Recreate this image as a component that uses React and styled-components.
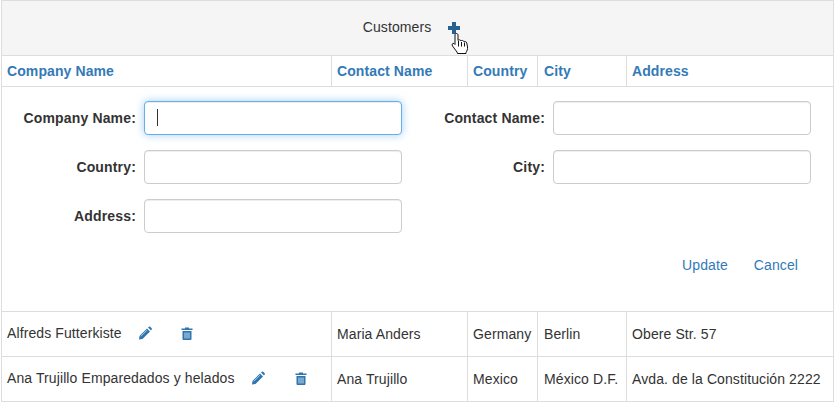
import React from "react";
import styled, { createGlobalStyle } from "styled-components";

const GlobalStyle = createGlobalStyle`
  html, body { margin: 0; padding: 0; background: #fff; }
  body { font-family: "Liberation Sans", Arial, sans-serif; font-size: 14px; letter-spacing: 0.1px; color: #333; }
`;

const customers = [
  { company: "Alfreds Futterkiste", contact: "Maria Anders", country: "Germany", city: "Berlin", address: "Obere Str. 57", between: 29 },
  { company: "Ana Trujillo Emparedados y helados", contact: "Ana Trujillo", country: "Mexico", city: "México D.F.", address: "Avda. de la Constitución 2222", between: 30 },
];

const columns = ["Company Name", "Contact Name", "Country", "City", "Address"];

const Grid = styled.div`
  width: 833px;
  height: 402px;
  box-sizing: border-box;
  margin-left: 1px;
  border: 1px solid #ddd;
  border-bottom: 0;
  display: flex;
  flex-direction: column;
  overflow: hidden;
`;

const TitleBar = styled.div`
  height: 54px;
  flex: none;
  background: #f5f5f5;
  border-bottom: 1px solid #ddd;
  display: flex;
  justify-content: center;
  align-items: center;
  gap: 17px;
  padding-right: 12px;
`;

const TitleText = styled.span`
  position: relative;
  top: -1px;
`;

const AddButton = styled.span`
  position: relative;
  display: flex;
  width: 12px;
  height: 12px;
  color: #286090;
`;

const HandCursor = styled.svg`
  position: absolute;
  left: 3px;
  top: 10px;
  width: 18px;
  height: 22px;
`;

const Row = styled.div`
  display: grid;
  grid-template-columns: 329px 136px 70px 89px 1fr;
  height: ${(p) => p.$height}px;
  flex: none;
  border-bottom: 1px solid #ddd;
`;

const HeadCell = styled.a`
  display: flex;
  align-items: center;
  padding-left: ${(p) => (p.$wide ? 6 : 5)}px;
  border-left: ${(p) => (p.$first ? 0 : "1px solid #ddd")};
  color: #337ab7;
  font-weight: 700;
  white-space: nowrap;
`;

const Cell = styled.div`
  display: flex;
  align-items: center;
  padding-left: ${(p) => (p.$wide ? 6 : 5)}px;
  border-left: ${(p) => (p.$first ? 0 : "1px solid #ddd")};
  white-space: nowrap;
`;

const CompanyName = styled.span`
  position: relative;
  top: -1px;
`;

const Actions = styled.span`
  position: relative;
  top: -1px;
  display: flex;
  align-items: center;
  gap: ${(p) => p.$between}px;
  margin-left: 17px;
  color: #2f75b0;
`;

const EditForm = styled.div`
  height: 225px;
  flex: none;
  box-sizing: border-box;
  border-bottom: 1px solid #ddd;
  padding-top: 14px;
  display: flex;
  flex-direction: column;
`;

const Fields = styled.div`
  display: grid;
  grid-template-columns: 134px 258px 135px 258px;
  column-gap: 8px;
  row-gap: 15px;
  align-items: center;
`;

const Label = styled.label`
  font-weight: 700;
  letter-spacing: 0.16px;
  text-align: right;
  white-space: nowrap;
`;

const Field = styled.div`
  position: relative;
  height: 34px;
  width: 258px;
  box-sizing: border-box;
  border: 1px solid ${(p) => (p.$focused ? "#66afe9" : "#ccc")};
  border-radius: 4px;
  background: #fff;
  box-shadow: ${(p) =>
    p.$focused
      ? "inset 0 1px 1px rgba(0,0,0,.075), 0 0 8px rgba(102,175,233,.6)"
      : "inset 0 1px 1px rgba(0,0,0,.075)"};
`;

const Caret = styled.span`
  position: absolute;
  left: 12px;
  top: 7px;
  width: 1px;
  height: 17px;
  background: #333;
`;

const Buttons = styled.div`
  display: flex;
  justify-content: flex-end;
  gap: 26px;
  padding-right: 35px;
  margin-top: 22px;
`;

const LinkButton = styled.a`
  color: #337ab7;
  line-height: 20px;
`;

function PlusIcon() {
  return (
    <svg width="12" height="12" viewBox="0 0 12 12" fill="currentColor">
      <path d="M4 0h4v4h4v4H8v4H4V8H0V4h4z" />
    </svg>
  );
}

function Hand() {
  return (
    <HandCursor viewBox="0 0 18 22">
      <path
        d="M4 3C4 1 7 1 7 3V8.500C7.500 7.500 9.500 7.500 10 9C10.500 8 12.500 8.200 13 9.800C13.500 9 15.500 9.500 15.800 11L16.500 15C16.800 17 16 19 15 20.500V21.500H6.500L6 20L1.500 14C.5 12.500 1.500 10.800 3 11.500L4 12.500Z"
        fill="#fff"
        stroke="#111"
        strokeWidth="1"
        strokeLinejoin="round"
      />
      <path d="M7.500 9V14.500M10.500 10V14.500M13.500 10.500V14.500" stroke="#111" strokeWidth="1" fill="none" />
    </HandCursor>
  );
}

function PencilIcon() {
  return (
    <svg width="13" height="14" viewBox="0 0 13 14">
      <path d="M0.500 10 8 2.500 11 5.500 3.500 13 0 13.500z" fill="currentColor" />
      <path d="M1.800 10.300 8 4.100" stroke="#a9c6e2" strokeWidth="1" />
      <path d="M9 1.500 10 0.700C10.400 0.400 10.900 0.400 11.200 0.700L12.700 2.200C13 2.500 13 3 12.700 3.400L12 4.500z" fill="currentColor" />
    </svg>
  );
}

function TrashIcon() {
  return (
    <svg width="12" height="13" viewBox="0 0 12 13">
      <path d="M4 1.500V.5H8V1.500H11.500V3H.5V1.500z" fill="currentColor" />
      <path d="M1.500 4H10.500V11.700C10.500 12.400 10 13 9.300 13H2.700C2 13 1.500 12.400 1.500 11.700z" fill="currentColor" />
      <path d="M4 5.500V11.500M6 5.500V11.500M8 5.500V11.500" stroke="#fff" strokeWidth="1" opacity=".75" />
    </svg>
  );
}

function FormField({ label, focused }) {
  return (
    <>
      <Label>{label}</Label>
      <Field $focused={focused}>{focused && <Caret />}</Field>
    </>
  );
}

export default function App() {
  return (
    <>
      <GlobalStyle />
      <Grid>
        <TitleBar>
          <TitleText>Customers</TitleText>
          <AddButton>
            <PlusIcon />
            <Hand />
          </AddButton>
        </TitleBar>
        <Row $height={30}>
          {columns.map((name, i) => (
            <HeadCell key={name} $first={i === 0} $wide={name === "City"}>
              {name}
            </HeadCell>
          ))}
        </Row>
        <EditForm>
          <Fields>
            <FormField label="Company Name:" focused />
            <FormField label="Contact Name:" />
            <FormField label="Country:" />
            <FormField label="City:" />
            <FormField label="Address:" />
          </Fields>
          <Buttons>
            <LinkButton>Update</LinkButton>
            <LinkButton>Cancel</LinkButton>
          </Buttons>
        </EditForm>
        {customers.map((c) => (
          <Row key={c.company} $height={44}>
            <Cell $first>
              <CompanyName>{c.company}</CompanyName>
              <Actions $between={c.between}>
                <PencilIcon />
                <TrashIcon />
              </Actions>
            </Cell>
            <Cell>{c.contact}</Cell>
            <Cell>{c.country}</Cell>
            <Cell $wide>{c.city}</Cell>
            <Cell>{c.address}</Cell>
          </Row>
        ))}
      </Grid>
    </>
  );
}
